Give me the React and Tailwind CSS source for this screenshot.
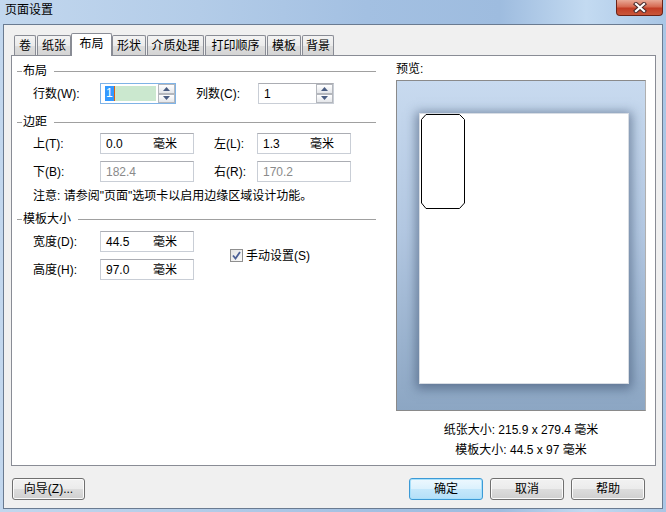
import React from "react";

const FONT = "font-['Liberation_Sans','Noto_Sans_CJK_SC',sans-serif]";

const tabs = ["卷", "纸张", "布局", "形状", "介质处理", "打印顺序", "模板", "背景"];
const tabWidths = [22, 34, 41, 34, 57, 61, 34, 32];

function Tab({ label, width, active }) {
  if (active) {
    return (
      <div
        style={{ width }}
        className="relative z-10 -mx-px -mb-px flex h-[23px] items-center justify-center rounded-t-[2px] border border-b-0 border-[#898c95] bg-white pb-[2px]"
      >
        {label}
      </div>
    );
  }
  return (
    <div
      style={{ width }}
      className="flex h-[20px] items-center justify-center rounded-t-[2px] border border-b-0 border-[#898c95] bg-[linear-gradient(#f3f3f3,#ebebeb_50%,#dedede_50%,#d4d4d4)]"
    >
      {label}
    </div>
  );
}

function GroupHeader({ title, className = "" }) {
  return (
    <div className={`flex h-[14px] items-center pl-[5px] pr-0 ${className}`}>
      <div className="h-px w-[5px] bg-[#a0a0a0]" />
      <span className="ml-[1px] leading-[14px]">{title}</span>
      <div className="ml-[7px] h-px flex-1 bg-[#a0a0a0]" />
    </div>
  );
}

function Field({ value, disabled }) {
  return (
    <div className="flex h-[21px] w-[94px] items-center border border-[#c9ced6] border-t-[#abadb3] bg-white pl-[5px]">
      <span className={`w-[47px] ${disabled ? "text-[#8a8a8a]" : "text-black"}`}>{value}</span>
      {!disabled && <span>毫米</span>}
    </div>
  );
}

function SpinBtn({ up }) {
  return (
    <div className="flex flex-1 items-center justify-center border border-[#b4b7bd] bg-[linear-gradient(#ffffff,#e4e6ea)]">
      <svg width="7" height="4" viewBox="0 0 7 4">
        {up ? <path d="M0 4 L3.5 0 L7 4 Z" fill="#4a5d82" /> : <path d="M0 0 L3.5 4 L7 0 Z" fill="#4a5d82" />}
      </svg>
    </div>
  );
}

function SpinField({ focused, width }) {
  return (
    <div
      style={{ width }}
      className={`flex h-[21px] items-stretch border bg-white ${focused ? "border-[#7fb3e6]" : "border-[#c9ced6] border-t-[#abadb3]"}`}
    >
      <div className="flex flex-1 items-center pl-[4px] pr-[2px]">
        {focused ? (
          <div className="flex h-[15px] flex-1 items-center bg-[#cbe8cf]">
            <span className="bg-[#3399ff] px-[1px] leading-[15px] text-white">1</span>
            <span className="h-[15px] w-px bg-[#e06010]" />
          </div>
        ) : (
          <span className="pl-px">1</span>
        )}
      </div>
      <div className="flex w-[17px] flex-col">
        <SpinBtn up />
        <SpinBtn />
      </div>
    </div>
  );
}

function Btn({ children, primary, className = "" }) {
  return (
    <button
      className={`flex h-[22px] items-center justify-center rounded-[3px] border ${
        primary
          ? "border-[#3c9ad6] bg-[linear-gradient(#edf8fe,#dbf1fd_50%,#c5e8fb_50%,#b4dff8)] shadow-[inset_0_0_0_1px_#a7e0fb]"
          : "border-[#707070] bg-[linear-gradient(#f2f2f2,#ebebeb_50%,#dddddd_50%,#cfcfcf)] shadow-[inset_0_0_0_1px_#fbfbfb]"
      } ${className}`}
    >
      {children}
    </button>
  );
}

export default function App() {
  return (
    <div
      className={`${FONT} relative h-[512px] w-[666px] overflow-hidden bg-[linear-gradient(90deg,#c2d7ee_0%,#b3cce8_30%,#a3c0e2_55%,#9ebcdf_75%,#c3daf1_88%,#a9c6e5_100%)] text-[12px] text-black`}
    >
      {/* Title bar */}
      <div className="flex h-[24px] items-start pl-[5px] pt-[2px] leading-[16px]">页面设置</div>
      <div className="absolute right-[3px] top-0 flex h-[16px] w-[47px] items-center justify-center rounded-b-[4px] border border-t-0 border-[#6b2216] bg-[linear-gradient(#e9a996,#d66a52_45%,#c23d25_55%,#c9573a)]">
        <svg width="14" height="11" viewBox="0 0 14 11">
          <path d="M3 2 L11 9 M11 2 L3 9" stroke="#4a2b2b" strokeWidth="4.2" strokeLinecap="square" />
          <path d="M3 2 L11 9 M11 2 L3 9" stroke="#ffffff" strokeWidth="2.2" strokeLinecap="square" />
        </svg>
      </div>

      {/* Client area */}
      <div className="mx-[3px] h-[485px] border border-[#6a7b91] bg-[#f0f0f0] pl-[7px] pr-[6px] pt-[8px]">
        {/* Tabs */}
        <div className="flex h-[22px] items-end gap-px pl-[3px]">
          {tabs.map((t, i) => (
            <Tab key={t} label={t} width={tabWidths[i]} active={i === 2} />
          ))}
        </div>

        {/* Panel */}
        <div className="flex h-[411px] w-[645px] border border-[#898c95] bg-white">
          {/* Left column */}
          <div className="w-[364px]">
            <GroupHeader title="布局" className="mt-[8px]" />
            <div className="mt-[5px] flex h-[21px] items-center pl-[21px]">
              <span className="w-[67px]">行数(W):</span>
              <SpinField focused width={76} />
              <span className="ml-[20px] w-[62px]">列数(C):</span>
              <SpinField width={76} />
            </div>

            <GroupHeader title="边距" className="mt-[11px]" />
            <div className="mt-[4px] flex h-[21px] items-center pl-[21px]">
              <span className="w-[67px]">上(T):</span>
              <Field value="0.0" />
              <span className="ml-[20px] w-[43px]">左(L):</span>
              <Field value="1.3" />
            </div>
            <div className="mt-[7px] flex h-[21px] items-center pl-[21px]">
              <span className="w-[67px]">下(B):</span>
              <Field value="182.4" disabled />
              <span className="ml-[20px] w-[43px]">右(R):</span>
              <Field value="170.2" disabled />
            </div>
            <div className="mt-[6px] h-[16px] pl-[21px] leading-[16px]">
              注意: 请参阅"页面"选项卡以启用边缘区域设计功能。
            </div>

            <GroupHeader title="模板大小" className="mt-[8px]" />
            <div className="mt-[5px] flex items-center pl-[21px]">
              <div className="flex flex-col gap-[7px]">
                <div className="flex h-[21px] items-center">
                  <span className="w-[67px]">宽度(D):</span>
                  <Field value="44.5" />
                </div>
                <div className="flex h-[21px] items-center">
                  <span className="w-[67px]">高度(H):</span>
                  <Field value="97.0" />
                </div>
              </div>
              <div className="ml-[36px] flex items-center">
                <div className="flex h-[13px] w-[13px] items-center justify-center border border-[#8f8f8f] bg-[linear-gradient(135deg,#e4e4e4,#fafafa)]">
                  <svg width="9" height="9" viewBox="0 0 9 9">
                    <path d="M1 4.5 L3.5 7.5 L8 1" stroke="#4b5f96" strokeWidth="1.8" fill="none" />
                  </svg>
                </div>
                <span className="ml-[3px]">手动设置(S)</span>
              </div>
            </div>
          </div>

          {/* Right column: preview */}
          <div className="ml-[20px] flex w-[250px] flex-col">
            <div className="mt-[5px] h-[16px] leading-[16px]">预览:</div>
            <div className="mt-[3px] h-[331px] border border-[#8a8a8a] border-r-[#b0b0b0] bg-[linear-gradient(#c8daef,#b3c8e2_45%,#8ca6c3)] pl-[22px] pt-[32px]">
              <div className="h-[271px] w-[210px] border border-[#d8dde4] bg-white pl-px pt-0 shadow-[0_2px_10px_3px_rgba(55,75,105,0.55)]">
                <svg width="44" height="95" viewBox="0 0 44 95" className="block">
                  <path
                    d="M5 0.5 H38.5 L43.5 5.5 V89 L38.5 94.5 H5 L0.5 89 V5.5 Z"
                    fill="none"
                    stroke="#000"
                    strokeWidth="1"
                  />
                </svg>
              </div>
            </div>
            <div className="mt-[9px] text-center leading-[20px]">
              <div>纸张大小: 215.9 x 279.4 毫米</div>
              <div>模板大小: 44.5 x 97 毫米</div>
            </div>
          </div>
        </div>

        {/* Bottom buttons */}
        <div className="mt-[12px] flex items-center pl-[1px]">
          <Btn className="w-[73px]">向导(Z)...</Btn>
          <div className="ml-auto mr-[11px] flex gap-[7px]">
            <Btn primary className="w-[74px]">确定</Btn>
            <Btn className="w-[74px]">取消</Btn>
            <Btn className="w-[74px]">帮助</Btn>
          </div>
        </div>
      </div>
    </div>
  );
}
